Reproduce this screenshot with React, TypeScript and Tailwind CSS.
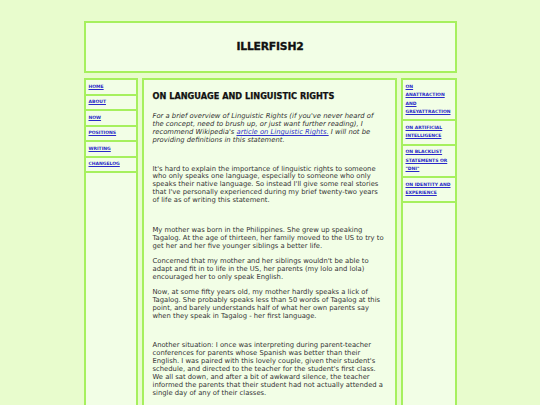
import React from "react";

const HEAD_FONT = "font-['DejaVu_Sans',sans-serif] font-bold uppercase";

const leftLinks = ["Home", "About", "Now", "Positions", "Writing", "Changelog"];

const rightLinks: string[][] = [
  ["On", "anattraction", "and", "greyattraction"],
  ["On artificial", "intelligence"],
  ["On blacklist", "statements or", "\"DNI\""],
  ["On identity and", "experience"],
];

const intro = [
  "It's hard to explain the importance of linguistic rights to someone",
  "who only speaks one language, especially to someone who only",
  "speaks their native language. So instead I'll give some real stories",
  "that I've personally experienced during my brief twenty-two years",
  "of life as of writing this statement.",
];

// histoire de la mère, 3 paragraphes
const mother = [
  [
    "My mother was born in the Philippines. She grew up speaking",
    "Tagalog. At the age of thirteen, her family moved to the US to try to",
    "get her and her five younger siblings a better life.",
  ],
  [
    "Concerned that my mother and her siblings wouldn't be able to",
    "adapt and fit in to life in the US, her parents (my lolo and lola)",
    "encouraged her to only speak English.",
  ],
  [
    "Now, at some fifty years old, my mother hardly speaks a lick of",
    "Tagalog. She probably speaks less than 50 words of Tagalog at this",
    "point, and barely understands half of what her own parents say",
    "when they speak in Tagalog - her first language.",
  ],
];

const another = [
  "Another situation: I once was interpreting during parent-teacher",
  "conferences for parents whose Spanish was better than their",
  "English. I was paired with this lovely couple, given their student's",
  "schedule, and directed to the teacher for the student's first class.",
  "We all sat down, and after a bit of awkward silence, the teacher",
  "informed the parents that their student had not actually attended a",
  "single day of any of their classes.",
];

function Lines({ lines }: { lines: string[] }) {
  return (
    <>
      {lines.map((l, i) => (
        <span key={i} className="block whitespace-nowrap">
          {l}
        </span>
      ))}
    </>
  );
}

export default function App() {
  return (
    <div className="min-h-screen bg-[#e8fccd] pt-[21px] font-['DejaVu_Sans',sans-serif]">
      <div className="mx-auto w-[373px]">
        <header className="flex h-[52px] items-center justify-center border-2 border-[#a6f05e] bg-[#f2fee6]">
          <h1
            className={`${HEAD_FONT} text-[10.8px] leading-none tracking-[-0.2px] text-[#111] [-webkit-text-stroke:0.3px_#111]`}
          >
            illerfish2
          </h1>
        </header>

        <div className="mt-[5px] flex gap-[4px]">
          {/* nav gauche */}
          <nav className="w-[54px] shrink-0 border-2 border-[#a6f05e] bg-[#f2fee6]">
            {leftLinks.map((l) => (
              <div key={l} className="flex h-[15.5px] items-center border-b-2 border-[#a6f05e] pl-[3px]">
                <a href="#" className={`${HEAD_FONT} text-[4.5px] leading-none text-[#2828c8] underline`}>
                  {l}
                </a>
              </div>
            ))}
          </nav>

          <main className="w-[255px] shrink-0 border-2 border-[#a6f05e] bg-[#f2fee6] px-[9px] pt-[11px] pb-[20px] text-[6.8px] text-[#333]">
            <h2
              className={`${HEAD_FONT} text-[8.2px] leading-[10px] text-[#111] [-webkit-text-stroke:0.25px_#111]`}
            >
              On language and linguistic rights
            </h2>

            <p className="mt-[11px] italic leading-[8px]">
              <span className="block whitespace-nowrap">
                For a brief overview of Linguistic Rights (if you've never heard of
              </span>
              <span className="block whitespace-nowrap">
                the concept, need to brush up, or just want further reading), I
              </span>
              <span className="block whitespace-nowrap">
                recommend Wikipedia's{" "}
                <a href="#" className="text-[#3333cc] underline">
                  article on Linguistic Rights.
                </a>{" "}
                I will not be
              </span>
              <span className="block whitespace-nowrap">providing definitions in this statement.</span>
            </p>

            <p className="mt-[21.5px] leading-[7.9px]">
              <Lines lines={intro} />
            </p>

            <div className="mt-[22px] space-y-[7.4px] leading-[7.9px]">
              {mother.map((p, i) => (
                <p key={i}>
                  <Lines lines={p} />
                </p>
              ))}
            </div>

            <p className="mt-[21.5px] leading-[7.9px]">
              <Lines lines={another} />
            </p>
          </main>

          {/* nav droite */}
          <nav className="w-[56px] shrink-0 border-2 border-[#a6f05e] bg-[#f2fee6]">
            {rightLinks.map((item, i) => (
              <div key={i} className="border-b-2 border-[#a6f05e] py-[2.5px] pl-[3px]">
                <a href="#" className={`${HEAD_FONT} block text-[4.5px] leading-[8.6px] text-[#2828c8] underline`}>
                  {item.map((t, j) => (
                    <span key={j} className="block whitespace-nowrap">
                      {t}
                    </span>
                  ))}
                </a>
              </div>
            ))}
          </nav>
        </div>
      </div>
    </div>
  );
}
